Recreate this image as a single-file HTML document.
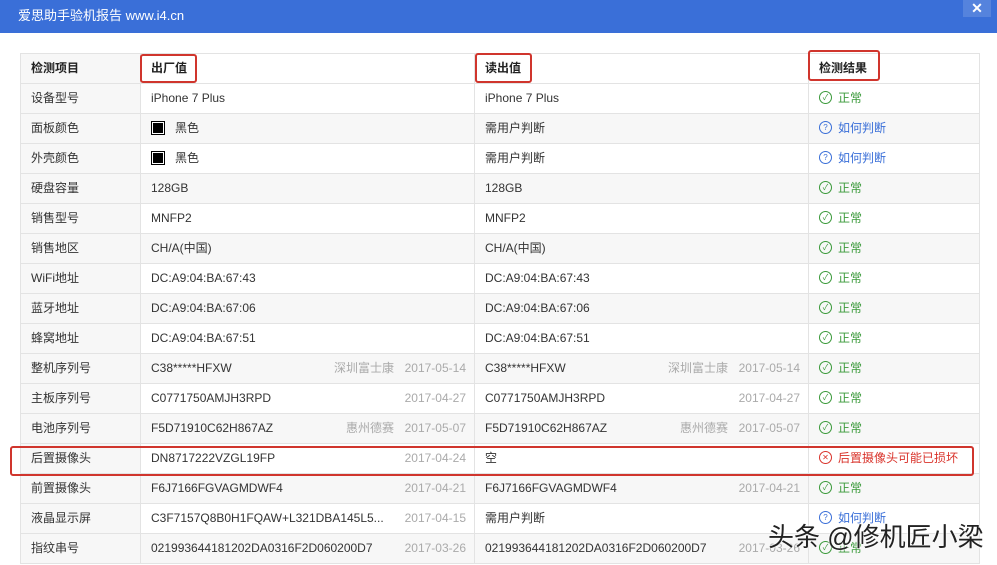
<!DOCTYPE html>
<html><head><meta charset="utf-8"><style>
body{margin:0;width:997px;height:565px;background:#fff;font-family:"Liberation Sans","Noto Sans CJK SC",sans-serif;font-size:12px;color:#333;position:relative;overflow:hidden}
.bar{position:absolute;left:0;top:0;width:997px;height:33px;background:#3a6fd8;color:#fff;font-size:13px;line-height:32px}
.bar span{position:absolute;left:18px}
.x{position:absolute;left:963px;top:0;width:28px;height:17px;background:#5583dd;color:#fff;font-size:14px;line-height:16px;text-align:center;font-weight:bold}
table{position:absolute;left:20px;top:53px;border-collapse:collapse;width:959px;table-layout:fixed}
td{height:29px;line-height:29px;border:1px solid #e3e3e3;padding:0 10px;white-space:nowrap;overflow:hidden;position:relative}
tr:nth-child(odd) td{background:#f7f7f7}
td:first-child{background:#f7f7f7}
tr.h td{font-weight:bold;color:#222;background:#f7f7f7}
tr.h td:nth-child(2),tr.h td:nth-child(3),tr.h td:nth-child(4){background:#fff}
.r{position:absolute;right:8px;top:0;color:#aaa}
.r2{position:absolute;right:80px;top:0;color:#aaa}
.ok{color:#3a9a3a}.q{color:#3a6fd8}.bad{color:#d9332b}
.ic{display:inline-block;width:11px;height:11px;border:1px solid currentColor;border-radius:50%;font-size:8px;line-height:11px;text-align:center;margin-right:6px;vertical-align:middle;position:relative;top:-1px}
.sq{display:inline-block;width:10px;height:10px;background:#000;outline:1px solid #fff;box-shadow:0 0 0 2px #000;margin:0 12px 0 2px;vertical-align:middle;position:relative;top:-1px}
.box{position:absolute;border:2px solid #d0352d;border-radius:3px}
.wm{position:absolute;left:768px;top:517px;font-size:26px;color:#222;text-shadow:0 0 2px #fff,0 0 2px #fff}
</style></head><body>
<div class="bar"><span>爱思助手验机报告 www.i4.cn</span><div class="x">✕</div></div>
<table>
<colgroup><col style="width:120px"><col style="width:334px"><col style="width:334px"><col style="width:171px"></colgroup>
<tr class="h"><td>检测项目</td><td>出厂值</td><td>读出值</td><td>检测结果</td></tr>
<tr><td>设备型号</td><td>iPhone 7 Plus</td><td>iPhone 7 Plus</td><td class="ok"><span class="ic">✓</span>正常</td></tr>
<tr><td>面板颜色</td><td><span class="sq"></span>黑色</td><td>需用户判断</td><td class="q"><span class="ic">?</span>如何判断</td></tr>
<tr><td>外壳颜色</td><td><span class="sq"></span>黑色</td><td>需用户判断</td><td class="q"><span class="ic">?</span>如何判断</td></tr>
<tr><td>硬盘容量</td><td>128GB</td><td>128GB</td><td class="ok"><span class="ic">✓</span>正常</td></tr>
<tr><td>销售型号</td><td>MNFP2</td><td>MNFP2</td><td class="ok"><span class="ic">✓</span>正常</td></tr>
<tr><td>销售地区</td><td>CH/A(中国)</td><td>CH/A(中国)</td><td class="ok"><span class="ic">✓</span>正常</td></tr>
<tr><td>WiFi地址</td><td>DC:A9:04:BA:67:43</td><td>DC:A9:04:BA:67:43</td><td class="ok"><span class="ic">✓</span>正常</td></tr>
<tr><td>蓝牙地址</td><td>DC:A9:04:BA:67:06</td><td>DC:A9:04:BA:67:06</td><td class="ok"><span class="ic">✓</span>正常</td></tr>
<tr><td>蜂窝地址</td><td>DC:A9:04:BA:67:51</td><td>DC:A9:04:BA:67:51</td><td class="ok"><span class="ic">✓</span>正常</td></tr>
<tr><td>整机序列号</td><td>C38*****HFXW<span class="r2">深圳富士康</span><span class="r">2017-05-14</span></td><td>C38*****HFXW<span class="r2">深圳富士康</span><span class="r">2017-05-14</span></td><td class="ok"><span class="ic">✓</span>正常</td></tr>
<tr><td>主板序列号</td><td>C0771750AMJH3RPD<span class="r">2017-04-27</span></td><td>C0771750AMJH3RPD<span class="r">2017-04-27</span></td><td class="ok"><span class="ic">✓</span>正常</td></tr>
<tr><td>电池序列号</td><td>F5D71910C62H867AZ<span class="r2">惠州德赛</span><span class="r">2017-05-07</span></td><td>F5D71910C62H867AZ<span class="r2">惠州德赛</span><span class="r">2017-05-07</span></td><td class="ok"><span class="ic">✓</span>正常</td></tr>
<tr><td>后置摄像头</td><td>DN8717222VZGL19FP<span class="r">2017-04-24</span></td><td>空</td><td class="bad"><span class="ic">✕</span>后置摄像头可能已损坏</td></tr>
<tr><td>前置摄像头</td><td>F6J7166FGVAGMDWF4<span class="r">2017-04-21</span></td><td>F6J7166FGVAGMDWF4<span class="r">2017-04-21</span></td><td class="ok"><span class="ic">✓</span>正常</td></tr>
<tr><td>液晶显示屏</td><td>C3F7157Q8B0H1FQAW+L321DBA145L5...<span class="r">2017-04-15</span></td><td>需用户判断</td><td class="q"><span class="ic">?</span>如何判断</td></tr>
<tr><td>指纹串号</td><td>021993644181202DA0316F2D060200D7<span class="r">2017-03-26</span></td><td>021993644181202DA0316F2D060200D7<span class="r">2017-03-26</span></td><td class="ok"><span class="ic">✓</span>正常</td></tr>
</table>
<div class="box" style="left:140px;top:54px;width:53px;height:25px"></div>
<div class="box" style="left:475px;top:53px;width:53px;height:26px"></div>
<div class="box" style="left:808px;top:50px;width:68px;height:27px"></div>
<div class="box" style="left:10px;top:446px;width:960px;height:26px"></div>
<div class="wm">头条 @修机匠小梁</div>
</body></html>
